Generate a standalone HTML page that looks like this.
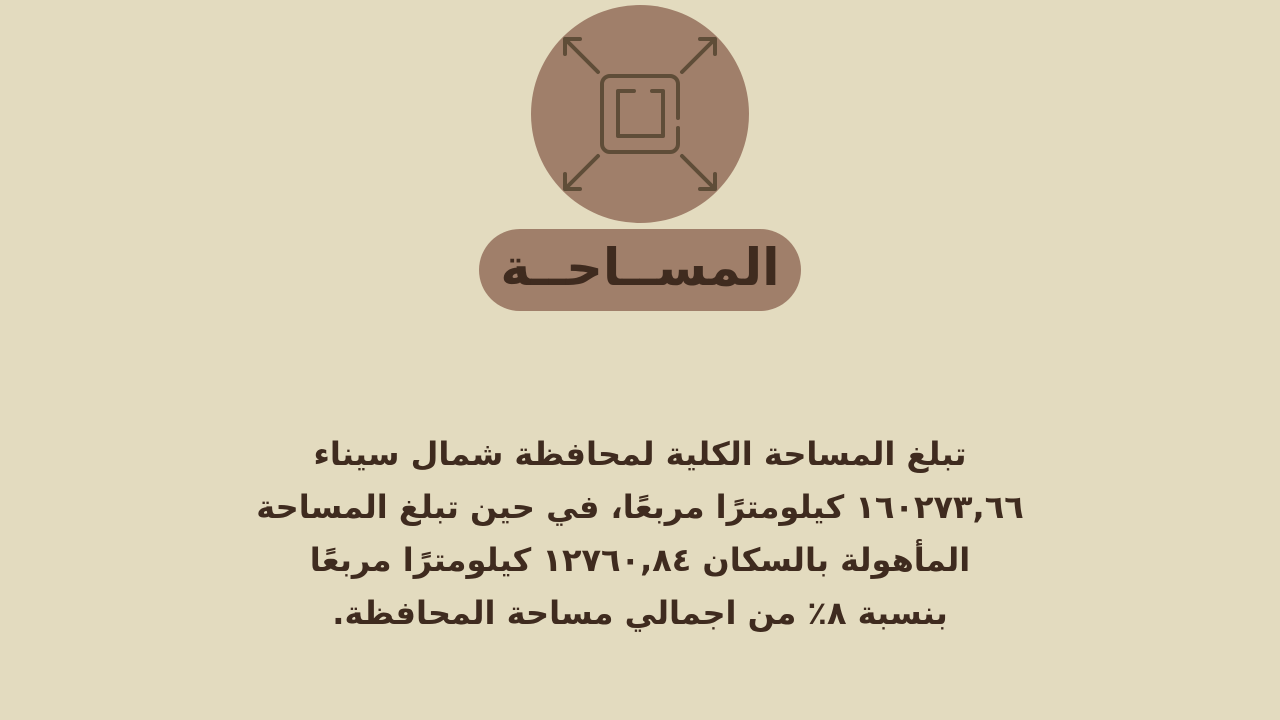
<!DOCTYPE html>
<html><head><meta charset="utf-8"><style>
body{margin:0;width:1280px;height:720px;background:#e3dbbf;overflow:hidden;font-family:"DejaVu Sans",sans-serif;color:#3f2b1f}
.c{position:absolute;left:531px;top:5px;width:218px;height:218px;border-radius:50%;background:#a07f6a}
.p{position:absolute;left:479px;top:229px;width:322px;height:82px;border-radius:41px;background:#a07f6a;text-align:center;line-height:80px;font-size:51px;font-weight:bold;direction:rtl}
.t{position:absolute;left:200px;width:880px;top:428px;text-align:center;direction:rtl;font-size:32px;font-weight:bold;line-height:53px}
</style></head><body>
<div class="c"></div>
<svg style="position:absolute;left:0;top:0" width="1280" height="330" fill="none" stroke="#5f4d38" stroke-width="4" stroke-linecap="round" stroke-linejoin="round">
<path d="M678 118V84a8 8 0 0 0-8-8H610a8 8 0 0 0-8 8v60a8 8 0 0 0 8 8h60a8 8 0 0 0 8-8v-16"/>
<path d="M634 91h-16v45h45V91h-11"/>
<path d="M598 72L565 39M565 39v15M565 39h15"/>
<path d="M682 72L715 39M715 39v15M715 39h-15"/>
<path d="M598 156L565 189M565 189v-15M565 189h15"/>
<path d="M682 156L715 189M715 189v-15M715 189h-15"/>
</svg>
<div class="p">المســاحــة</div>
<div class="t">تبلغ المساحة الكلية لمحافظة شمال سيناء<br>١٦٠٢٧٣,٦٦ كيلومترًا مربعًا، في حين تبلغ المساحة<br>المأهولة بالسكان ١٢٧٦٠,٨٤ كيلومترًا مربعًا<br>بنسبة ٨٪ من اجمالي مساحة المحافظة.</div>
</body></html>
